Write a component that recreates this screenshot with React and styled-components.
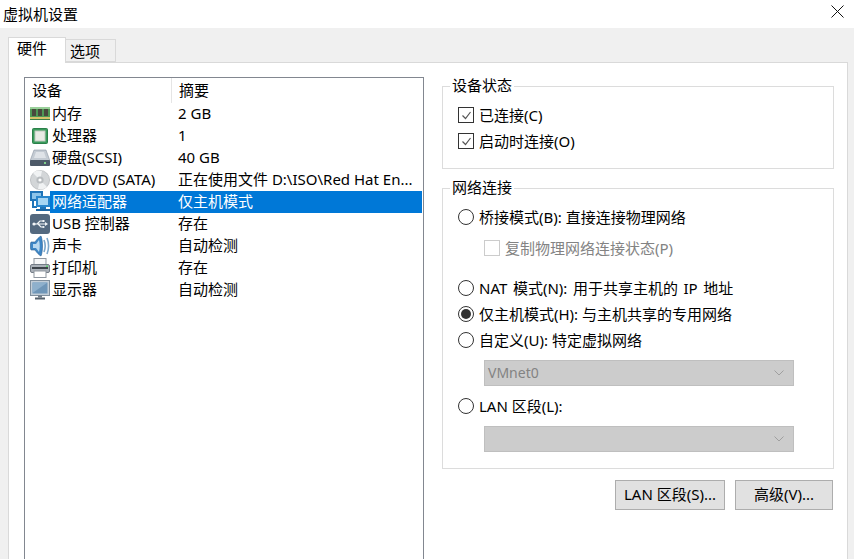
import React from 'react';
import styled, { createGlobalStyle } from 'styled-components';

const Global = createGlobalStyle`
  html, body {
    margin: 0;
    height: 559px;
    overflow: hidden;
    background: #f0f0f0;
  }
  body {
    font-family: "Noto Sans", "Noto Sans CJK SC", sans-serif;
    font-size: 15px;
    color: #000;
  }
`;

const MemoryIcon = () => (
  <svg width="20" height="14" viewBox="0 0 20 14">
    <rect x="0" y="0" width="20" height="13" fill="#4f9a55" />
    <rect x="0" y="0" width="20" height="2" fill="#9ad09a" />
    <rect x="2" y="2" width="4" height="7" fill="#4a4a3e" />
    <rect x="8" y="2" width="4" height="7" fill="#4a4a3e" />
    <rect x="14" y="2" width="4" height="7" fill="#4a4a3e" />
    <rect x="0" y="10" width="20" height="2" fill="#d8c46a" />
    <rect x="0" y="12" width="20" height="1" fill="#3f7f45" />
  </svg>
);

const CpuIcon = () => (
  <svg width="20" height="18" viewBox="0 0 20 18">
    <rect x="2.5" y="1.5" width="15" height="15" rx="1" fill="#3a9a5c" stroke="#2b8049" />
    <rect x="5" y="4" width="10" height="10" fill="#e9ebe6" stroke="#c4c9c0" />
  </svg>
);

const DiskIcon = () => (
  <svg width="20" height="18" viewBox="0 0 20 18">
    <path d="M4 1h12l4 11H0z" fill="#c4cbd3" stroke="#8b96a2" strokeWidth="0.6" />
    <path d="M6 3h8l2 6H4z" fill="#dfe3e8" />
    <rect x="0" y="11" width="20" height="6" rx="1" fill="#4d5a68" />
    <rect x="14" y="13" width="2" height="2" fill="#7fd08a" />
  </svg>
);

const CdIcon = () => (
  <svg width="20" height="20" viewBox="0 0 20 20">
    <circle cx="10" cy="10" r="9.6" fill="#d3d6d8" stroke="#a9adb0" strokeWidth="0.6" />
    <path d="M10 10L3 3A10 10 0 0 1 12 1z" fill="#f0f2f3" />
    <path d="M10 10L17 17A10 10 0 0 1 8 19z" fill="#f0f2f3" />
    <circle cx="10" cy="10" r="3.6" fill="#b9bdc0" />
    <circle cx="10" cy="10" r="1.6" fill="#fff" />
  </svg>
);

const NetworkIcon = () => (
  <svg width="20" height="22" viewBox="0 0 20 22">
    <rect x="0" y="0" width="13" height="10" fill="#1f74b8" />
    <rect x="2" y="2" width="9" height="6" fill="#8cc4ea" />
    <path d="M3 10v6h4" fill="none" stroke="#1f74b8" strokeWidth="2" />
    <rect x="6" y="5" width="14" height="11" fill="#2a86cc" />
    <rect x="8" y="7" width="10" height="7" fill="#a8d6f3" />
    <rect x="10" y="16" width="6" height="2" fill="#1f74b8" />
    <rect x="6" y="18" width="14" height="2" fill="#1b66a4" />
  </svg>
);

const UsbIcon = () => (
  <svg width="20" height="20" viewBox="0 0 20 20">
    <rect x="0" y="0" width="20" height="20" rx="3" fill="#54697f" />
    <path d="M3 10h13M7 10l3-3h3M8 10l3 3h2" fill="none" stroke="#f2f5f7" strokeWidth="1.2" />
    <circle cx="4" cy="10" r="1.6" fill="#f2f5f7" />
    <path d="M15 8l3 2-3 2z" fill="#f2f5f7" />
    <rect x="12.5" y="6" width="2" height="2" fill="#f2f5f7" />
    <circle cx="13.5" cy="13" r="1.1" fill="#f2f5f7" />
  </svg>
);

const SpeakerIcon = () => (
  <svg width="20" height="22" viewBox="0 0 20 22">
    <path d="M1 7c-1 2-1 6 0 8l4 0c2 3 4 5 6 6 2-5 2-15 0-20-2 1-4 3-6 6z" fill="#3d86c6" stroke="#2b5f92" strokeWidth="0.6" />
    <path d="M3 9h3l3-4c1 4 1 8 0 12l-3-4H3z" fill="#b8d8f0" />
    <path d="M14 5c1.6 4 1.6 8 0 12M17 3c2 5 2 11 0 16" fill="none" stroke="#7ba6cb" strokeWidth="1.6" />
  </svg>
);

const PrinterIcon = () => (
  <svg width="20" height="20" viewBox="0 0 20 20">
    <rect x="4" y="0.5" width="12" height="7" fill="#f6f7f8" stroke="#8f97a0" />
    <rect x="0.5" y="6.5" width="19" height="8" rx="1.5" fill="#aab1b9" stroke="#737c86" />
    <rect x="2" y="9" width="16" height="2" fill="#3c434a" />
    <rect x="16" y="7.5" width="2" height="1.5" fill="#5fd070" />
    <rect x="4" y="13" width="12" height="6.5" fill="#fff" stroke="#8f97a0" />
  </svg>
);

const MonitorIcon = () => (
  <svg width="20" height="20" viewBox="0 0 20 20">
    <rect x="0.5" y="0.5" width="19" height="15" fill="#c3ced8" stroke="#7f8e9c" />
    <rect x="2.5" y="2.5" width="15" height="11" fill="#6f96b8" />
    <path d="M2.5 2.5h15L2.5 13z" fill="#8eb0cc" />
    <rect x="8" y="15.5" width="4" height="2" fill="#6e7b87" />
    <rect x="5" y="17.5" width="10" height="2" fill="#55616c" />
  </svg>
);

const CheckMark = () => (
  <svg width="13" height="13" viewBox="0 0 13 13">
    <path d="M2.5 6.5l3 3 5-6.5" fill="none" stroke="#555" strokeWidth="1.2" />
  </svg>
);

const Chevron = () => (
  <svg width="10" height="6" viewBox="0 0 10 6">
    <path d="M0.5 0.5l4.5 4.5 4.5-4.5" fill="none" stroke="#9f9f9f" />
  </svg>
);

const CloseIcon = () => (
  <svg width="13" height="13" viewBox="0 0 13 13">
    <path d="M0.5 0.5l12 12M12.5 0.5l-12 12" stroke="#111" strokeWidth="1" />
  </svg>
);

const devices = [
  { icon: <MemoryIcon />, name: '内存', summary: '2 GB' },
  { icon: <CpuIcon />, name: '处理器', summary: '1' },
  { icon: <DiskIcon />, name: '硬盘(SCSI)', summary: '40 GB' },
  { icon: <CdIcon />, name: 'CD/DVD (SATA)', summary: '正在使用文件 D:\\ISO\\Red Hat En...' },
  { icon: <NetworkIcon />, name: '网络适配器', summary: '仅主机模式', selected: true },
  { icon: <UsbIcon />, name: 'USB 控制器', summary: '存在' },
  { icon: <SpeakerIcon />, name: '声卡', summary: '自动检测' },
  { icon: <PrinterIcon />, name: '打印机', summary: '存在' },
  { icon: <MonitorIcon />, name: '显示器', summary: '自动检测' },
];

const App = () => (
  <>
    <Global />
    <TitleBar>
      <Title>虚拟机设置</Title>
      <CloseButton><CloseIcon /></CloseButton>
    </TitleBar>
    <TabStrip>
      <Tab $active>硬件</Tab>
      <Tab>选项</Tab>
    </TabStrip>
    <Panel>
      <DeviceList>
        <HeaderRow>
          <HeaderCell $width={147}>设备</HeaderCell>
          <HeaderCell>摘要</HeaderCell>
        </HeaderRow>
        {devices.map((d) => (
          <DeviceRow key={d.name}>
            <IconSlot>{d.icon}</IconSlot>
            <RowBody $selected={d.selected}>
              <NameCell>{d.name}</NameCell>
              <SummaryCell>{d.summary}</SummaryCell>
            </RowBody>
          </DeviceRow>
        ))}
      </DeviceList>
      <Side>
        <Group $height={83}>
          <Legend>设备状态</Legend>
          <CheckRow>
            <CheckBox><CheckMark /></CheckBox>
            <Label>已连接(C)</Label>
          </CheckRow>
          <CheckRow>
            <CheckBox><CheckMark /></CheckBox>
            <Label>启动时连接(O)</Label>
          </CheckRow>
        </Group>
        <Group $height={281}>
          <Legend>网络连接</Legend>
          <RadioRow>
            <Radio />
            <Label>桥接模式(B): 直接连接物理网络</Label>
          </RadioRow>
          <SubCheckRow>
            <CheckBox $disabled />
            <Label>复制物理网络连接状态(P)</Label>
          </SubCheckRow>
          <RadioRow $top={9}>
            <Radio />
            <Label $spaced>NAT 模式(N): 用于共享主机的 IP 地址</Label>
          </RadioRow>
          <RadioRow>
            <Radio $checked />
            <Label>仅主机模式(H): 与主机共享的专用网络</Label>
          </RadioRow>
          <RadioRow>
            <Radio />
            <Label>自定义(U): 特定虚拟网络</Label>
          </RadioRow>
          <Select><SelectText>VMnet0</SelectText><Chevron /></Select>
          <RadioRow $top={7}>
            <Radio />
            <Label>LAN 区段(L):</Label>
          </RadioRow>
          <Select><span /><Chevron /></Select>
        </Group>
        <Buttons>
          <Button $width={110}>LAN 区段(S)...</Button>
          <Button $width={98}>高级(V)...</Button>
        </Buttons>
      </Side>
    </Panel>
  </>
);

const TitleBar = styled.div`
  height: 28px;
  background: #fff;
  display: flex;
  align-items: center;
  justify-content: space-between;
  padding: 0 10px 0 3px;
`;

const Title = styled.div`
  line-height: 24px;
`;

const CloseButton = styled.div`
  display: flex;
  margin-top: -5px;
`;

const TabStrip = styled.div`
  display: flex;
  align-items: flex-end;
  height: 34px;
  padding-left: 8px;
`;

const Tab = styled.div`
  box-sizing: border-box;
  height: ${(p) => (p.$active ? 26 : 23)}px;
  width: ${(p) => (p.$active ? 58 : 50)}px;
  margin-bottom: ${(p) => (p.$active ? -1 : 0)}px;
  padding: ${(p) => (p.$active ? '0 0 0 8px' : '0 0 0 4px')};
  line-height: ${(p) => (p.$active ? 20 : 22)}px;
  background: ${(p) => (p.$active ? '#fff' : '#f0f0f0')};
  border: 1px solid #d9d9d9;
  border-bottom: ${(p) => (p.$active ? 'none' : '1px solid #d9d9d9')};
  border-left: ${(p) => (p.$active ? '1px solid #d9d9d9' : 'none')};
  position: relative;
`;

const Panel = styled.div`
  box-sizing: border-box;
  width: 840px;
  height: 520px;
  margin-left: 8px;
  background: #fff;
  border: 1px solid #d9d9d9;
  padding: 14px 12px 0 15px;
  display: flex;
  gap: 18px;
`;

const DeviceList = styled.div`
  box-sizing: border-box;
  width: 400px;
  height: 500px;
  flex: none;
  border: 1px solid #828790;
  background: #fff;
`;

const HeaderRow = styled.div`
  display: flex;
  height: 25px;
  align-items: center;
`;

const HeaderCell = styled.div`
  box-sizing: border-box;
  width: ${(p) => (p.$width ? `${p.$width}px` : 'auto')};
  height: 25px;
  line-height: 25px;
  padding-left: 7px;
  border-right: ${(p) => (p.$width ? '1px solid #e5e5e5' : 'none')};
  flex: ${(p) => (p.$width ? 'none' : 1)};
`;

const DeviceRow = styled.div`
  display: flex;
  height: 22px;
  align-items: center;
  padding-right: 1px;
`;

const IconSlot = styled.div`
  width: 25px;
  flex: none;
  padding-left: 5px;
  box-sizing: border-box;
  height: 22px;
  display: flex;
  align-items: center;
`;

const RowBody = styled.div`
  flex: 1;
  height: 22px;
  line-height: 20px;
  display: flex;
  white-space: nowrap;
  color: ${(p) => (p.$selected ? '#fff' : '#000')};
  background: ${(p) => (p.$selected ? '#0078d7' : 'transparent')};
`;

const NameCell = styled.div`
  width: 126px;
  flex: none;
  padding-left: 2px;
`;

const SummaryCell = styled.div`
  flex: 1;
`;

const Side = styled.div`
  width: 392px;
  flex: none;
  display: flex;
  flex-direction: column;
  gap: 19px;
  padding-top: 9px;
`;

const Group = styled.div`
  position: relative;
  box-sizing: border-box;
  height: ${(p) => p.$height}px;
  border: 1px solid #dcdcdc;
  padding: 15px 0 0 15px;
`;

const Legend = styled.div`
  position: absolute;
  top: -12px;
  left: 7px;
  padding: 0 2px;
  line-height: 20px;
  background: #fff;
`;

const Label = styled.span`
  padding-bottom: 2px;
  word-spacing: ${(p) => (p.$spaced ? '1.7px' : 'normal')};
`;

const CheckRow = styled.div`
  display: flex;
  align-items: center;
  height: 26px;
  gap: 5px;
`;

const SubCheckRow = styled(CheckRow)`
  height: 36px;
  padding-left: 26px;
  color: #838383;
`;

const CheckBox = styled.span`
  box-sizing: border-box;
  width: 16px;
  height: 16px;
  flex: none;
  display: flex;
  align-items: center;
  justify-content: center;
  border: 1px solid ${(p) => (p.$disabled ? '#cccccc' : '#333')};
  background: #fff;
`;

const RadioRow = styled.div`
  display: flex;
  align-items: center;
  height: 26px;
  gap: 5px;
  margin-top: ${(p) => p.$top || 0}px;
`;

const Radio = styled.span`
  box-sizing: border-box;
  width: 16px;
  height: 16px;
  flex: none;
  border-radius: 50%;
  border: 1px solid #333;
  background: #fff;
  display: flex;
  align-items: center;
  justify-content: center;
  &::after {
    content: "";
    display: ${(p) => (p.$checked ? 'block' : 'none')};
    width: 10px;
    height: 10px;
    border-radius: 50%;
    background: #333;
  }
`;

const Select = styled.div`
  box-sizing: border-box;
  width: 310px;
  height: 26px;
  margin: 7px 0 0 26px;
  padding: 0 9px 0 3px;
  display: flex;
  align-items: center;
  justify-content: space-between;
  background: #cccccc;
  border: 1px solid #bfbfbf;
  color: #838383;
`;

const SelectText = styled.span`
  font-size: 14px;
  padding-bottom: 2px;
`;

const Buttons = styled.div`
  display: flex;
  justify-content: flex-end;
  gap: 10px;
  margin-top: -8px;
  padding-right: 1px;
`;

const Button = styled.div`
  box-sizing: border-box;
  height: 30px;
  width: ${(p) => p.$width}px;
  line-height: 27px;
  text-align: center;
  white-space: nowrap;
  background: #e1e1e1;
  border: 1px solid #adadad;
`;

export default App;
